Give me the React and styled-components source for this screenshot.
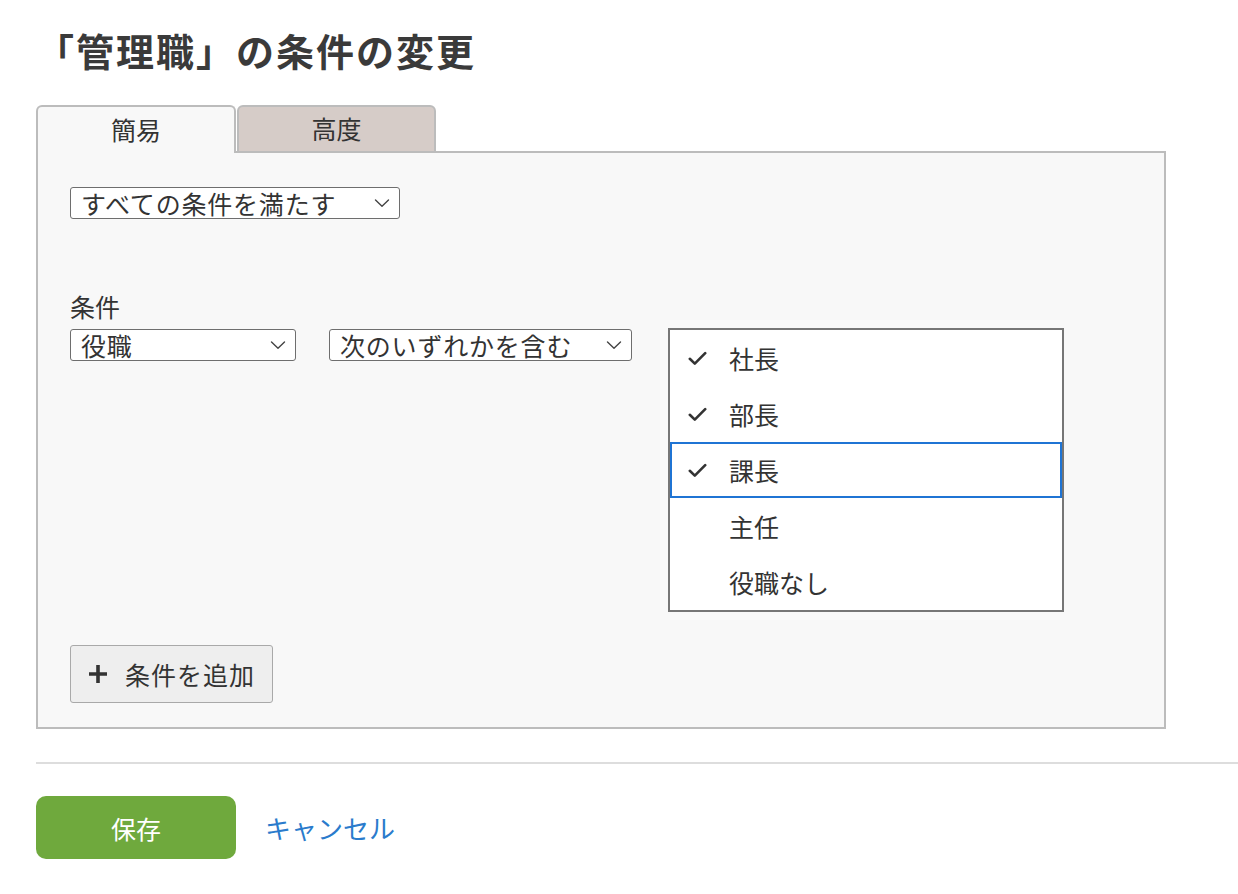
import React, { useState } from 'react'
import styled, { createGlobalStyle } from 'styled-components'

const GlobalStyle = createGlobalStyle`
  html, body {
    margin: 0;
    padding: 0;
    background: #ffffff;
  }
  body {
    font-family: "Noto Sans CJK JP", "Noto Sans", sans-serif;
    color: #333333;
  }
`

const Page = styled.div`
  width: 1238px;
  padding: 22px 0 36px 36px;
  box-sizing: border-box;
`

const Title = styled.h1`
  margin: 0 0 27px 0;
  font-size: 38px;
  line-height: 56px;
  font-weight: 700;
  color: #3a3a3a;
  letter-spacing: 2px;
`

const TabBar = styled.div`
  display: flex;
  gap: 1px;
  height: 46px;
  position: relative;
  z-index: 1;
`

const Tab = styled.button`
  width: ${p => p.$width}px;
  height: 48px;
  box-sizing: border-box;
  border: 2px solid #bcbcbc;
  border-bottom: ${p => (p.$active ? 'none' : '2px solid #bcbcbc')};
  border-radius: 6px 6px 0 0;
  background: ${p => (p.$active ? '#f8f8f8' : '#d6ccc8')};
  font-family: inherit;
  font-size: 25px;
  color: #333;
  padding: 0 0 2px 0;
  cursor: pointer;
`

const Panel = styled.div`
  width: 1130px;
  height: 578px;
  box-sizing: border-box;
  border: 2px solid #bcbcbc;
  background: #f8f8f8;
  padding: 34px 32px 24px 32px;
  display: flex;
  flex-direction: column;
`

const SelectBox = styled.div`
  width: ${p => p.$width}px;
  height: 32px;
  box-sizing: border-box;
  border: 1px solid #6e6e6e;
  border-radius: 3px;
  background: #ffffff;
  display: flex;
  align-items: center;
  justify-content: space-between;
  padding: 0 9px 0 10px;
  font-size: 25px;
  line-height: 30px;
  letter-spacing: 0.8px;
  color: #333;
`

const Label = styled.div`
  margin-top: 72px;
  font-size: 25px;
  line-height: 30px;
  color: #333;
`

const ConditionRow = styled.div`
  display: flex;
  align-items: flex-start;
  gap: 33px;
  margin-top: 8px;
`

const ListBox = styled.ul`
  margin: -1px 0 0 3px;
  padding: 0;
  list-style: none;
  width: 396px;
  box-sizing: border-box;
  border: 2px solid #767676;
  background: #ffffff;
`

const Option = styled.li`
  height: 56px;
  box-sizing: border-box;
  display: flex;
  align-items: center;
  padding-left: ${p => (p.$focused ? '16px' : '18px')};
  font-size: 25px;
  color: #333;
  border: ${p => (p.$focused ? '2px solid #1f74d4' : 'none')};
`

const CheckSlot = styled.span`
  width: 41px;
  display: flex;
  align-items: center;
`

const AddButton = styled.button`
  margin-top: 33px;
  align-self: flex-start;
  height: 59px;
  padding: 0 17px 0 16px;
  box-sizing: border-box;
  display: flex;
  align-items: center;
  gap: 16px;
  border: 1px solid #a9a9a9;
  border-radius: 3px;
  background: #eeeeee;
  font-family: inherit;
  font-size: 25px;
  letter-spacing: 1px;
  color: #333;
  cursor: pointer;
`

const Divider = styled.hr`
  margin: 33px 0 32px 0;
  border: none;
  border-top: 2px solid #dddddd;
`

const Footer = styled.div`
  display: flex;
  align-items: center;
  gap: 29px;
`

const SaveButton = styled.button`
  width: 200px;
  height: 63px;
  border: none;
  border-radius: 10px;
  background: #6fa93d;
  color: #ffffff;
  font-family: inherit;
  font-size: 25px;
  cursor: pointer;
`

const CancelLink = styled.a`
  font-size: 26px;
  color: #2a7bcc;
  text-decoration: none;
  cursor: pointer;
`

const Chevron = () => (
  <svg width="16" height="10" viewBox="0 0 16 10" fill="none">
    <path d="M1.5 2 L8 8.2 L14.5 2" stroke="#444" strokeWidth="1.4" strokeLinecap="round" strokeLinejoin="round" />
  </svg>
)

const Check = () => (
  <svg width="19" height="15" viewBox="0 0 19 15" fill="none">
    <path d="M1.8 7.8 L6.8 12.6 L17.2 2.2" stroke="#333" strokeWidth="2.6" strokeLinecap="round" strokeLinejoin="round" />
  </svg>
)

const Plus = () => (
  <svg width="22" height="22" viewBox="0 0 22 22" fill="none">
    <path d="M11 2 V20 M2 11 H20" stroke="#333" strokeWidth="3.6" />
  </svg>
)

const options = [
  { label: '社長', checked: true },
  { label: '部長', checked: true },
  { label: '課長', checked: true, focused: true },
  { label: '主任', checked: false },
  { label: '役職なし', checked: false },
]

export default function App() {
  const [tab, setTab] = useState('simple')
  return (
    <Page>
      <GlobalStyle />
      <Title>「管理職」の条件の変更</Title>
      <TabBar>
        <Tab $width={200} $active={tab === 'simple'} onClick={() => setTab('simple')}>簡易</Tab>
        <Tab $width={199} $active={tab === 'advanced'} onClick={() => setTab('advanced')}>高度</Tab>
      </TabBar>
      <Panel>
        <SelectBox $width={330}>
          <span>すべての条件を満たす</span>
          <Chevron />
        </SelectBox>
        <Label>条件</Label>
        <ConditionRow>
          <SelectBox $width={226}>
            <span>役職</span>
            <Chevron />
          </SelectBox>
          <SelectBox $width={303}>
            <span>次のいずれかを含む</span>
            <Chevron />
          </SelectBox>
          <ListBox>
            {options.map(o => (
              <Option key={o.label} $focused={o.focused}>
                <CheckSlot>{o.checked && <Check />}</CheckSlot>
                {o.label}
              </Option>
            ))}
          </ListBox>
        </ConditionRow>
        <AddButton>
          <Plus />
          条件を追加
        </AddButton>
      </Panel>
      <Divider />
      <Footer>
        <SaveButton>保存</SaveButton>
        <CancelLink>キャンセル</CancelLink>
      </Footer>
    </Page>
  )
}
